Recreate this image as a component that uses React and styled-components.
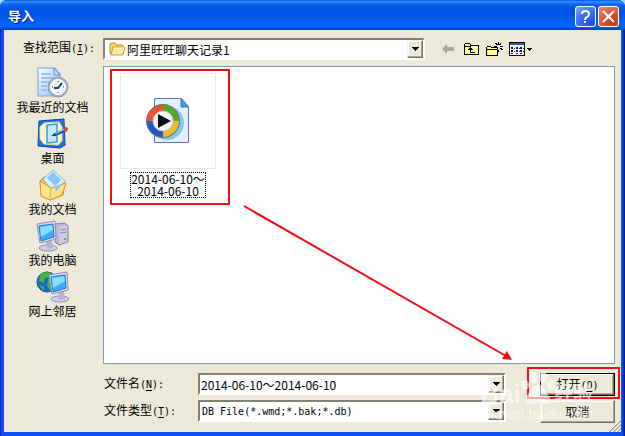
import React, { useState } from "react";
import styled, { createGlobalStyle, css } from "styled-components";

const GlobalStyle = createGlobalStyle`
  * {
    box-sizing: border-box;
  }

  body {
    margin: 0;
    background: #a9cdf5;
    color: #000;
    font-family: "Noto Sans CJK SC", sans-serif;
    font-size: 12px;
    line-height: 16px;
  }

  button, input, select {
    font-family: inherit;
    color: inherit;
  }
`;

const Dialog = styled.div`
  position: relative;
  display: flex;
  flex-direction: column;
  min-height: 100vh;
  padding: 0 4px 4px;
  border-radius: 7px 7px 0 0;
  overflow: hidden;
  background: linear-gradient(90deg, #0019cf 0, #0a50ee 2px, #0a50ee calc(100% - 3px), #00138c 100%);
`;

const TitleBar = styled.header`
  display: flex;
  align-items: center;
  gap: 2px;
  height: 30px;
  margin: 0 -4px;
  padding: 2px 6px 0 8px;
  background: linear-gradient(
    180deg,
    #0058ee 0%,
    #3593ff 6%,
    #0a66f2 14%,
    #0055e5 28%,
    #0054e3 50%,
    #0062fb 76%,
    #0066ff 88%,
    #0047d6 96%,
    #003dd7 100%
  );
`;

const Title = styled.h1`
  flex: 1;
  margin: 0;
  color: #fff;
  font-size: 13px;
  font-weight: 700;
  line-height: 18px;
  text-shadow: 1px 1px #0a1883;
`;

const CaptionButton = styled.button`
  display: flex;
  width: 21px;
  height: 21px;
  padding: 0;
  border: 1px solid #fff;
  border-radius: 3px;
  background: ${p =>
    p.$close
      ? "radial-gradient(circle at 80% 90%, #c5381b 0, #e25535 55%, #ee9078 100%)"
      : "radial-gradient(circle at 80% 90%, #1d4fe0 0, #3c72ee 55%, #88a9f6 100%)"};

  svg {
    margin: auto;
  }
`;

const Body = styled.main`
  flex: 1;
  display: grid;
  grid-template-columns: 99px minmax(0, 1fr);
  grid-template-rows: auto 1fr auto;
  padding: 8px 6px 9px 0;
  background: #ece9d8;
`;

const Latin = styled.span`
  font-family: "DejaVu Sans Mono", monospace;
  font-size: 10px;

  u {
    text-underline-offset: 2px;
  }
`;

const FieldLabel = styled.label`
  white-space: nowrap;
`;

const LookInLabel = styled(FieldLabel)`
  padding: 1px 0 0 19px;
`;

const LookInRow = styled.div`
  display: flex;
  align-items: center;
  gap: 16px;
  margin-bottom: 6px;
`;

const sunken = css`
  border: 2px solid;
  border-color: #858275 #fff #fff #858275;
  background: #fff;
`;

const Combo = styled.div`
  ${sunken}
  position: relative;
  display: flex;
  align-items: center;
  min-width: 0;
  height: 22px;
  flex: ${p => (p.$lookIn ? "0 1 322px" : "1 1 0")};

  > svg {
    flex: none;
    margin-left: 4px;
  }
`;

const comboText = css`
  flex: 1;
  min-width: 0;
  width: 100%;
  height: 18px;
  padding: 0 18px 0 1px;
  border: 0;
  outline: 0;
  background: transparent;
  appearance: none;
  font-size: 12px;
`;

const ComboSelect = styled.select`
  ${comboText}
  ${p => p.$latin && css`
    padding-left: 2px;
    font-family: "DejaVu Sans Mono", monospace;
    font-size: 10px;
  `}
`;

const ComboInput = styled.input`
  ${comboText}
`;

const raised = css`
  border: 1px solid;
  border-color: #f4f2e8 #716f64 #716f64 #f4f2e8;
  box-shadow: inset -1px -1px #aca899, inset 1px 1px #fff;
  background: #ece9d8;
`;

const DropArrow = styled.span`
  ${raised}
  position: absolute;
  top: 0;
  right: 0;
  bottom: 0;
  display: flex;
  width: 16px;
  pointer-events: none;

  svg {
    margin: auto;
  }
`;

const Tools = styled.div`
  display: flex;
  align-items: center;
  gap: 6px;
`;

const ToolButton = styled.button`
  display: flex;
  padding: 0;
  border: 0;
  background: none;
`;

const Places = styled.nav`
  display: flex;
  flex-direction: column;
  gap: 3px;
  padding: 1px 2px 0 0;
`;

const Place = styled.a`
  display: flex;
  flex-direction: column;
  align-items: center;
  color: #000;
  text-decoration: none;
  line-height: 16px;
`;

const FileList = styled.section`
  position: relative;
  min-height: 298px;
  padding: 2px 6px;
  border: 1px solid #7f9db9;
  background: #fff;
`;

const Highlight = styled.div`
  width: 120px;
  height: 136px;
  border: 2px solid #f20d12;
  padding-top: 2px;
`;

const FileItem = styled.figure`
  display: flex;
  flex-direction: column;
  align-items: center;
  gap: 3px;
  margin: 0 4px 0 0;
`;

const Thumb = styled.div`
  display: flex;
  width: 96px;
  height: 96px;
  border: 1px solid #ece9d8;

  svg {
    margin: auto;
  }
`;

const FileName = styled.figcaption`
  width: 76px;
  border: 1px dotted #000;
  line-height: 12px;
  text-align: center;
  white-space: nowrap;
`;

const Arrow = styled.svg`
  position: absolute;
  top: 136px;
  left: 138px;
  pointer-events: none;
`;

const Footer = styled.div`
  grid-column: 2;
  display: grid;
  grid-template-columns: 95px minmax(0, 1fr) 75px;
  row-gap: 4px;
  align-items: start;
  padding-top: 9px;
`;

const FooterCombo = styled.div`
  display: flex;
  margin-right: 34px;
`;

const FooterLabel = styled(FieldLabel)`
  padding: 2px 0 0 1px;
`;

const ActionSlot = styled.div`
  position: relative;
`;

const ActionButton = styled.button`
  ${raised}
  display: block;
  width: 100%;
  height: 23px;
  padding: 0;
  font-size: 12px;
  line-height: 16px;
  ${p => p.$default && css`
    border-color: #000;
    box-shadow: inset -1px -1px #716f64, inset 1px 1px #fff, inset -2px -2px #aca899;
  `}
`;

const ButtonMark = styled.div`
  position: absolute;
  inset: -6px -5px -3px -13px;
  border: 2px solid #f20d12;
  pointer-events: none;
`;

const Watermark = styled.div`
  position: absolute;
  right: 32px;
  bottom: 14px;
  color: #fff;
  font-family: "Liberation Sans", "Noto Sans CJK SC", sans-serif;
  white-space: nowrap;
  opacity: 0.62;
  pointer-events: none;
`;

const WatermarkLogo = styled.div`
  display: flex;
  align-items: flex-end;
  font-size: 26px;
  font-weight: 700;
  line-height: 24px;

  svg {
    flex: none;
  }
`;

const WatermarkCn = styled.span`
  font-size: 19px;
`;

const WatermarkUrl = styled.div`
  font-size: 14px;
  line-height: 16px;
`;

const Grip = styled.svg`
  position: absolute;
  right: 4px;
  bottom: 4px;
`;

const Triangle = () => (
  <svg width="7" height="4" viewBox="0 0 7 4" shapeRendering="crispEdges">
    <path d="M0 0h7v1H6v1H5v1H4v1H3V3H2V2H1V1H0z" />
  </svg>
);

const FolderIcon = () => (
  <svg width="17" height="16" viewBox="0 0 17 16">
    <path d="M1 4q0-2 2-2h3l2 2h5q1 0 1 1v8H2q-1 0-1-1z" fill="#f8d865" stroke="#bd8a1b" />
    <path d="M4 6h11q1 0 1 1l-2 6q0 1-1 1H2z" fill="#ffeb9b" stroke="#c6992e" />
    <path d="M5 7h10" stroke="#fffbd8" />
  </svg>
);

const BackIcon = () => (
  <svg width="16" height="16" viewBox="0 0 16 16">
    <path d="M1 8l5-5v3h7v4H6v3z" fill="#aca899" />
  </svg>
);

const UpIcon = () => (
  <svg width="17" height="16" viewBox="0 0 17 16" shapeRendering="crispEdges">
    <path d="M1.500 13.500v-10l1-1h4l1 1v1h8v9z" fill="#ffff99" stroke="#000" />
    <path d="M2 5h6" stroke="#000" />
    <path d="M7 6h1v1h1v1h1v1H8v2h4v1H7V9H5V8h1V7h1z" fill="#000" />
  </svg>
);

const NewFolderIcon = () => (
  <svg width="17" height="17" viewBox="0 0 17 17" shapeRendering="crispEdges">
    <path d="M.5 14.500v-8l1-1h3l1 1h6v8z" fill="#ffff85" stroke="#000" />
    <path d="M1 8h11" stroke="#000" />
    <path d="M12 1v3m0 5v2M8 5h3m3 0h3M9 2h1v1h1v1M15 2h-1v1h-1v1M14 7h1v1h1v1" stroke="#000" fill="none" />
  </svg>
);

const ViewIcon = () => (
  <svg width="24" height="16" viewBox="0 0 24 16" shapeRendering="crispEdges">
    <path d="M.5 1.500h15v13H.5z" fill="#fff" stroke="#000" />
    <path d="M1 2h14v2H1z" fill="#245bb4" />
    <path d="M2 6h2v2H2zm5 0h2v2H7zm4 0h2v2h-2zM2 9h2v2H2zm5 0h2v2H7zm4 0h2v2h-2zM2 12h2v1H2zm5 0h2v1H7zm4 0h2v1h-2z" fill="#10107b" />
    <path d="M5 7h1v1H5zm5 0h1v1h-1zm4 0h1v1h-1zM5 10h1v1H5zm5 0h1v1h-1zm4 0h1v1h-1z" fill="#333" />
    <path d="M18 7h5v1h-1v1h-1v1h-1V9h-1V8h-1z" />
  </svg>
);

const RecentIcon = () => (
  <svg width="32" height="32" viewBox="0 0 32 32">
    <defs>
      <linearGradient id="paper" x2="1" y2="1">
        <stop stopColor="#fff" />
        <stop offset="1" stopColor="#8bbdf5" />
      </linearGradient>
    </defs>
    <path d="M1 1h17l5 6v22H1z" fill="url(#paper)" stroke="#75a0df" />
    <path d="M17 1v7h6z" fill="#c6e1ff" stroke="#5d91df" />
    <path d="M4 7h10M4 11h13M4 15h8M4 19h6M4 23h6" stroke="#9dc3f6" strokeWidth="2" />
    <circle cx="21" cy="20" r="10" fill="#a7b4c9" stroke="#8a98b0" />
    <circle cx="21" cy="20" r="7.500" fill="#effbff" stroke="#fff" />
    <path d="M21 14v1m0 10v1m-6-6h1m10 0h1" stroke="#e78539" strokeWidth="2" />
    <path d="M25 16l-4 5h-4" stroke="#173e69" strokeWidth="2" fill="none" />
  </svg>
);

const DesktopIcon = () => (
  <svg width="32" height="32" viewBox="0 0 32 32">
    <path d="M2 3l25-2 1 26-5 3-22-2z" fill="#1f74dc" stroke="#0d469d" />
    <path d="M7 5l15-1 3 5v14l-4 4-14-1-4-5V9z" fill="#fff6c9" stroke="#f0d28a" />
    <path d="M10 7l10-1v18l-10 1z" fill="#c5eaff" stroke="#2e9bed" strokeWidth="1.500" />
    <path d="M17 17l12-5" stroke="#245da8" strokeWidth="3" />
    <path d="M18 16l10-5" stroke="#9bcbf6" />
    <path d="M14 18l4-3 1 3z" fill="#174778" />
    <circle cx="29" cy="11" r="2" fill="#d43f31" />
  </svg>
);

const DocumentsIcon = () => (
  <svg width="32" height="32" viewBox="0 0 32 32">
    <path d="M3 12l4-4 20 4-1 14-13 5-9-4z" fill="#f3c64d" stroke="#c78d1d" />
    <path d="M6 10l10-9 12 11-10 13z" fill="#dcefff" stroke="#8ab9e8" />
    <path d="M10 9l6-6 8 8-6 6z" fill="#82c6fa" />
    <path d="M3 12l11 7 15-5-4 12-12 5-9-4z" fill="#ffe581" stroke="#d19b29" />
    <path d="M14 18l-1 12" stroke="#e0b040" />
    <path d="M16 18l9-3-5 7z" fill="#8acdf1" />
  </svg>
);

const Monitor = () => (
  <g>
    <ellipse cx="12" cy="28" rx="9" ry="3" fill="#cfcfe6" stroke="#8f8fb8" />
    <path d="M10 21l6-1 1 8-6 1z" fill="#b4b4d4" />
    <path d="M1 4l18-3 1 18-16 4z" fill="#dedef0" stroke="#8f8fb8" />
    <path d="M3 6l14-2 1 13-13 4z" fill="#3eabfa" stroke="#2476d2" />
    <path d="M4 7l12-2 1 5L5 17z" fill="#8edcff" />
  </g>
);

const ComputerIcon = () => (
  <svg width="33" height="32" viewBox="0 0 33 32">
    <path d="M19 4l10-1 3 3v16l-9 3-4-3z" fill="#b5b5d6" stroke="#8080ac" />
    <path d="M23 7l8-2v17l-8 2z" fill="#cdcde6" />
    <path d="M24 10l6-1m-6 4l6-1" stroke="#8484b0" />
    <path d="M28 19h2" stroke="#42be35" strokeWidth="2" />
    <Monitor />
  </svg>
);

const NetworkIcon = () => (
  <svg width="33" height="32" viewBox="0 0 33 32">
    <circle cx="11" cy="11" r="10" fill="#176bc6" stroke="#114d99" />
    <path d="M4 4q5-5 11-2l-2 4-4 1-1 5-5-2zM12 8l7-3 2 9-6 6-4-5zM2 13l6 3v4z" fill="#44b838" />
    <g transform="translate(12 0)"><Monitor /></g>
  </svg>
);

const MediaFileIcon = () => (
  <svg width="46" height="48" viewBox="0 0 46 48">
    <path d="M9.500 1.500h27l7 8v36h-34z" fill="#e4efff" stroke="#6071ba" />
    <path d="M36 2v8h7z" fill="#4c9be7" stroke="#2878c8" />
    <circle cx="22" cy="26" r="17" fill="#80c8fc" />
    <circle cx="18" cy="24" r="17" fill="#727272" />
    <path d="M18 24V8A16 16 0 0 0 2 24z" fill="#ed5433" />
    <path d="M18 24h16A16 16 0 0 0 18 8z" fill="#58a728" />
    <path d="M18 24v16a16 16 0 0 0 16-16z" fill="#e8bd2f" />
    <path d="M18 24H2a16 16 0 0 0 16 16z" fill="#2459c5" />
    <circle cx="18" cy="24" r="10" fill="#f3f3f3" stroke="#ccc" />
    <path d="M13 17l13 7-13 7z" fill="#111" />
  </svg>
);

const PawIcon = () => (
  <svg width="34" height="35" viewBox="0 0 34 35">
    <g fill="#fff">
      <ellipse cx="12" cy="6" rx="4" ry="6" />
      <ellipse cx="22" cy="6" rx="4" ry="6" />
      <ellipse cx="4" cy="14" rx="4" ry="5" />
      <ellipse cx="30" cy="14" rx="4" ry="5" />
      <path d="M17 13q4 0 7 6t5 7q1 7-5 7-7-2-14 0-6 0-5-7 2-3 5-7t7-6z" />
    </g>
  </svg>
);

const places = [
  { name: "我最近的文档", Icon: RecentIcon },
  { name: "桌面", Icon: DesktopIcon },
  { name: "我的文档", Icon: DocumentsIcon },
  { name: "我的电脑", Icon: ComputerIcon },
  { name: "网上邻居", Icon: NetworkIcon }
];

const App = () => {
  const [fileName, setFileName] = useState("2014-06-10～2014-06-10");

  return (
    <Dialog>
      <GlobalStyle />
      <TitleBar>
        <Title>导入</Title>
        <CaptionButton aria-label="帮助">
          <svg width="15" height="17" viewBox="0 0 15 17">
            <path d="M4 6q0-3 3.500-3T11 6q0 2-2 3t-2 3M7 13v2" fill="none" stroke="#fff" strokeWidth="2" />
          </svg>
        </CaptionButton>
        <CaptionButton $close aria-label="关闭">
          <svg width="15" height="15" viewBox="0 0 15 15">
            <path d="M2 2l11 11M13 2l-11 11" stroke="#fff" strokeWidth="2.400" />
          </svg>
        </CaptionButton>
      </TitleBar>

      <Body>
        <LookInLabel htmlFor="look-in">
          查找范围<Latin>(<u>I</u>):</Latin>
        </LookInLabel>
        <LookInRow>
          <Combo $lookIn>
            <FolderIcon />
            <ComboSelect id="look-in">
              <option>阿里旺旺聊天记录1</option>
            </ComboSelect>
            <DropArrow><Triangle /></DropArrow>
          </Combo>
          <Tools>
            <ToolButton aria-label="后退"><BackIcon /></ToolButton>
            <ToolButton aria-label="向上"><UpIcon /></ToolButton>
            <ToolButton aria-label="新建文件夹"><NewFolderIcon /></ToolButton>
            <ToolButton aria-label="查看"><ViewIcon /></ToolButton>
          </Tools>
        </LookInRow>

        <Places>
          {places.map(({ name, Icon }) => (
            <Place href="#" key={name}>
              <Icon />
              {name}
            </Place>
          ))}
        </Places>

        <FileList>
          <Highlight>
            <FileItem>
              <Thumb><MediaFileIcon /></Thumb>
              <FileName>2014-06-10～<br />2014-06-10</FileName>
            </FileItem>
          </Highlight>
          <Arrow width="272" height="160" viewBox="0 0 272 160">
            <path d="M2 3l262 150" stroke="#f20d12" strokeWidth="2" />
            <path d="M270 157l-10-1 5-8z" fill="#f20d12" />
          </Arrow>
        </FileList>

        <Footer>
          <FooterLabel htmlFor="file-name">
            文件名<Latin>(<u>N</u>):</Latin>
          </FooterLabel>
          <FooterCombo>
            <Combo>
              <ComboInput id="file-name" value={fileName} onChange={e => setFileName(e.target.value)} />
              <DropArrow><Triangle /></DropArrow>
            </Combo>
          </FooterCombo>
          <ActionSlot>
            <ActionButton $default>打开<Latin>(<u>O</u>)</Latin></ActionButton>
            <ButtonMark />
          </ActionSlot>

          <FooterLabel htmlFor="file-type">
            文件类型<Latin>(<u>T</u>):</Latin>
          </FooterLabel>
          <FooterCombo>
            <Combo>
              <ComboSelect id="file-type" $latin>
                <option>DB File(*.wmd;*.bak;*.db)</option>
              </ComboSelect>
              <DropArrow><Triangle /></DropArrow>
            </Combo>
          </FooterCombo>
          <ActionButton>取消</ActionButton>
        </Footer>
      </Body>

      <Watermark>
        <WatermarkLogo>
          Bai<PawIcon /><WatermarkCn>经验</WatermarkCn>
        </WatermarkLogo>
        <WatermarkUrl>jingyan.baidu.com</WatermarkUrl>
      </Watermark>
      <Grip width="13" height="13" viewBox="0 0 13 13">
        <path d="M1 13L13 1M5 13l8-8M9 13l4-4" stroke="#aca899" strokeWidth="2" />
        <path d="M0 13L13 0M4 13l9-9M8 13l5-5" stroke="#fff" />
      </Grip>
    </Dialog>
  );
};

export default App;
